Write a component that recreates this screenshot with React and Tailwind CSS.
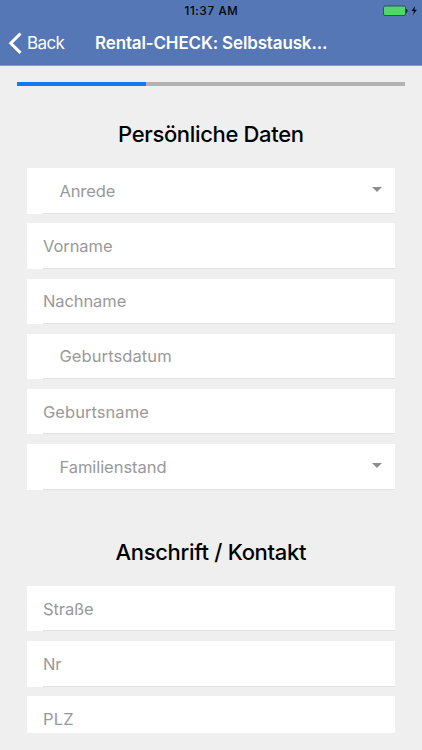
function Field({ label, indent, select, tracking }) {
  return (
    <div className="relative flex h-[45.3px] w-full shrink-0 items-center justify-between bg-white pr-[13px] pl-[16.3px]">
      <span
        className={`${indent ? "ml-[16.4px]" : ""} ${tracking || "tracking-[-0.1px]"} text-[16.5px] leading-[20px] text-[#999999]`}
      >
        {label}
      </span>
      {select && (
        <div className="mb-[3px] h-0 w-0 border-x-5 border-t-5 border-x-transparent border-t-[#8e8e8e]" />
      )}
      <div className="absolute right-0 bottom-0 left-[16.3px] h-px bg-[#e2e2e2]" />
    </div>
  );
}

function Title({ children, tracking }) {
  return (
    <h2 className={`text-center text-[22px] leading-[28px] font-[460] text-black ${tracking}`}>
      {children}
    </h2>
  );
}

export default function App() {
  return (
    <div className="flex h-[750px] w-[422px] flex-col overflow-hidden bg-[#efefef] font-['Inter','Liberation_Sans',sans-serif]">
      <header className="h-[65.5px] shrink-0 border-b border-[#8d9cba] bg-[#5577b6]">
        <div className="grid h-[22px] grid-cols-[1fr_auto_1fr] items-center pr-[4px]">
          <span />
          <span className="pl-[5px] text-[11.5px] leading-[22px] font-medium tracking-[0.7px] text-black">
            11:37 AM
          </span>
          <svg className="h-[12px] w-[36px] justify-self-end" viewBox="0 0 36 12">
            <rect x="1.5" y="1" width="22" height="9.5" rx="1.5" fill="#4cd964" stroke="#2d5267" />
            <path d="M24.5 4Q26 5.8 24.5 7.6Z" fill="#111a2a" stroke="#111a2a" strokeWidth="0.7" />
            <path d="M33.2 1L29.5 5.9H32L30.7 10.1L35 4.8H32.4Z" fill="#080d18" />
          </svg>
        </div>
        <div className="flex h-[42px] items-center text-white">
          <svg className="ml-[8px] h-[23px] w-[15px]" viewBox="0 0 15 23" fill="none">
            <path d="M12.5 1.5L2.8 11.2L12.5 20.9" stroke="white" strokeWidth="3" />
          </svg>
          <span className="ml-[4px] w-[68px] text-[17px] leading-[22px] tracking-[-0.6px]">Back</span>
          <span className="text-[17px] leading-[22px] font-semibold tracking-[-0.15px] whitespace-nowrap">
            Rental-CHECK: Selbstausk...
          </span>
        </div>
      </header>

      <div className="mt-[16.5px] mr-[17px] ml-[16.5px] h-[4px] shrink-0 bg-[#b2b2b2]">
        <div className="h-full w-[129.5px] bg-[#1279f3]" />
      </div>

      <main className="flex h-[647.3px] shrink-0 flex-col overflow-hidden pr-[27px] pl-[26.7px]">
        <div className="pt-[33.6px] pb-[20.7px]">
          <Title tracking="tracking-[-0.34px]">Persönliche Daten</Title>
        </div>
        <div className="flex shrink-0 flex-col gap-[9.9px]">
          <Field label="Anrede" indent select />
          <Field label="Vorname" tracking="tracking-[-0.08px]" />
          <Field label="Nachname" tracking="tracking-[-0.1px]" />
          <Field label="Geburtsdatum" indent tracking="tracking-[0.1px]" />
          <Field label="Geburtsname" tracking="tracking-[0.05px]" />
          <Field label="Familienstand" indent tracking="tracking-[-0.05px]" select />
        </div>
        <div className="pt-[48.4px] pb-[20.2px]">
          <Title tracking="tracking-[-0.3px]">Anschrift / Kontakt</Title>
        </div>
        <div className="flex shrink-0 flex-col gap-[9.9px]">
          <Field label="Straße" />
          <Field label="Nr" tracking="tracking-[-0.1px]" />
          <Field label="PLZ" tracking="tracking-[0.2px]" />
        </div>
      </main>
    </div>
  );
}
